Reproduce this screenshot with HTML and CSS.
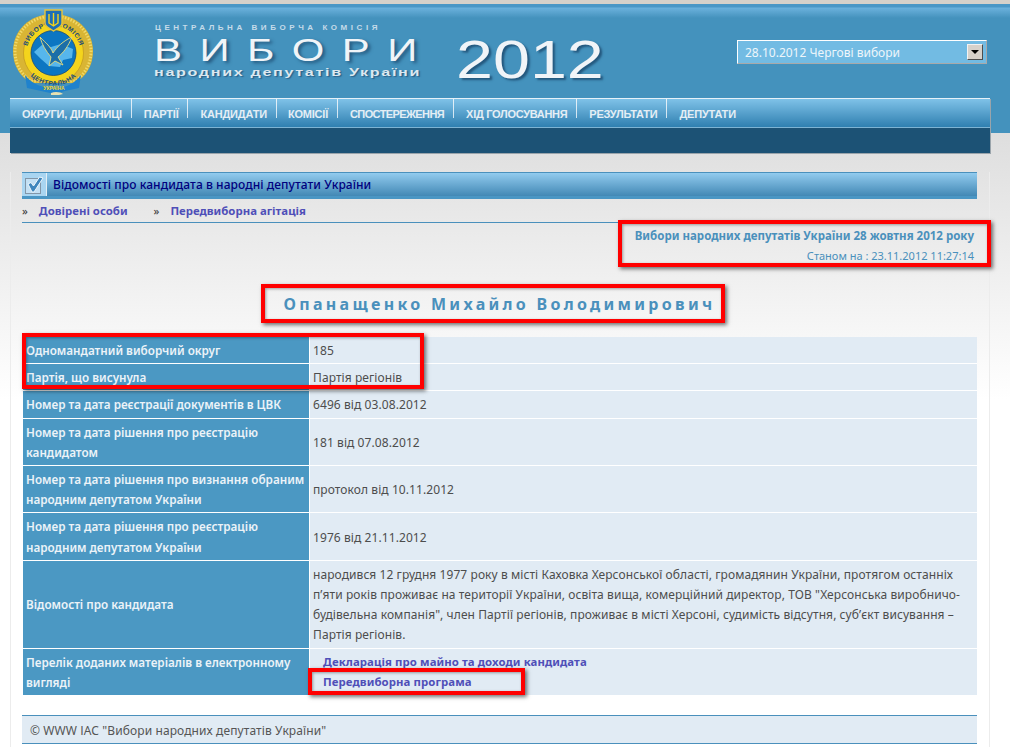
FILE: index.html
```html
<!DOCTYPE html>
<html lang="uk">

<head>
    <meta charset="UTF-8">
    <title>Вибори народних депутатів України 2012</title>
    <link rel="stylesheet" href="styles.css">
</head>

<body>

    <!-- Header -->
    <div class="header">
        <div class="header-top">
            <svg class="logo" width="84" height="90" viewBox="0 0 84 90">
                <defs>
                    <path id="ringTop" d="M13.5 44 A27 27 0 0 1 67.5 44" />
                    <path id="ringBottom" d="M8 44 A32.5 32.5 0 0 0 73 44" />
                </defs>
                <path d="M40 5 C64 5 80 22 80 42 C80 58 72 68 62 74 H18 C8 68 0 58 0 42 C0 22 16 5 40 5 Z" fill="#d9b534" />
                <path d="M40 7 C62 7 78 23 78 42 C78 56 71 66 62 72 H18 C9 66 2 56 2 42 C2 23 18 7 40 7 Z" fill="none" stroke="#f1d968" stroke-width="3" stroke-dasharray="1.5 1.5" />
                <circle cx="40.5" cy="44" r="30" fill="#f4d41c" stroke="#b98f1d" stroke-width="0.6" />
                <circle cx="40.5" cy="44" r="22.5" fill="#0c76c2" stroke="#174a78" stroke-width="0.8" />
                <path d="M21 43 L29 36 L38 38 L48 35 L60 40 L59 49 L50 51 L47 58 L36 57 L28 50 Z" fill="#56b6ec" />
                <path d="M27 28 C33 34 38 38 40 44 C44 38 50 32 59 28 C55 38 50 44 45 48 L50 56 L42 52 L36 57 L38 48 C33 42 29 36 27 28 Z" fill="#1b6ea8" stroke="#e9dc7c" stroke-width="0.9" />
                <text class="logo-ring"><textPath href="#ringTop" startOffset="50%" text-anchor="middle">ВИБОРЧА   КОМІСІЯ</textPath></text>
                <text class="logo-ring"><textPath href="#ringBottom" startOffset="50%" text-anchor="middle">ЦЕНТРАЛЬНА</textPath></text>
                <path d="M12 66 C20 76 30 79 41 79 C52 79 60 76 68 66 L66 79 L52 82 L42 85 L28 82 L14 79 Z" fill="#1f82cd" />
                <text class="logo-ribbon" x="41" y="81" text-anchor="middle">УКРАЇНА</text>
                <path d="M38 84 C42 82 48 83 50 85 L46 86 H38 Z" fill="#e8e0b0" />
                <path d="M32 1 H49 V14 C49 18 44 19 40.5 22 C37 19 32 18 32 14 Z" fill="#1d6fb5" stroke="#e8c53a" stroke-width="1.4" />
                <path d="M40.5 4 V17 M36 5 V14 L40.5 17 L45 14 V5" fill="none" stroke="#f4d41c" stroke-width="1.4" />
            </svg>
            <div class="site-title">
                <div class="title-small">ЦЕНТРАЛЬНА ВИБОРЧА КОМІСІЯ</div>
                <div class="title-big">ВИБОРИ</div>
                <div class="title-sub">народних депутатів України</div>
            </div>
            <div class="title-year">2012</div>
            <div class="election-select">
                <span>28.10.2012 Чергові вибори</span>
                <span class="select-btn"><i></i></span>
            </div>
        </div>

        <div class="navbar">
            <div class="menu">
                <a href="#">ОКРУГИ, ДІЛЬНИЦІ</a>
                <a href="#">ПАРТІЇ</a>
                <a href="#">КАНДИДАТИ</a>
                <a href="#">КОМІСІЇ</a>
                <a href="#">СПОСТЕРЕЖЕННЯ</a>
                <a href="#">ХІД ГОЛОСУВАННЯ</a>
                <a href="#">РЕЗУЛЬТАТИ</a>
                <a href="#">ДЕПУТАТИ</a>
            </div>
            <div class="submenu"></div>
        </div>
    </div>

    <!-- Main Content -->
    <div class="content">
        <div class="section-title">
            <span class="section-icon">
                <svg width="20" height="20" viewBox="0 0 20 20">
                    <rect x="1.5" y="3.5" width="15" height="15" fill="#c3e0f4" stroke="#8296a8" />
                    <path d="M4 9 L7 7.5 L9.5 11 L15.5 2 L19 3 L10 17 L8 17 Z" fill="#3f86bd" stroke="#eef6fb" stroke-width="1" />
                </svg>
            </span>
            <span>Відомості про кандидата в народні депутати України</span>
        </div>

        <div class="subnav">
            <span>»</span><a href="#">Довірені особи</a>
            <span>»</span><a href="#">Передвиборна агітація</a>
        </div>

        <div class="election-info">
            <div class="election-name">Вибори народних депутатів України 28 жовтня 2012 року</div>
            <div class="election-date">Станом на : 23.11.2012 11:27:14</div>
        </div>

        <h1>Опанащенко Михайло Володимирович</h1>

        <table class="info-table">
            <tr>
                <th>Одномандатний виборчий округ</th>
                <td>185</td>
            </tr>
            <tr>
                <th>Партія, що висунула</th>
                <td>Партія регіонів</td>
            </tr>
            <tr>
                <th>Номер та дата реєстрації документів в ЦВК</th>
                <td>6496 від 03.08.2012</td>
            </tr>
            <tr>
                <th>Номер та дата рішення про реєстрацію кандидатом</th>
                <td>181 від 07.08.2012</td>
            </tr>
            <tr>
                <th>Номер та дата рішення про визнання обраним народним депутатом України</th>
                <td>протокол від 10.11.2012</td>
            </tr>
            <tr>
                <th>Номер та дата рішення про реєстрацію народним депутатом України</th>
                <td>1976 від 21.11.2012</td>
            </tr>
            <tr>
                <th>Відомості про кандидата</th>
                <td>народився 12 грудня 1977 року в місті Каховка Херсонської області, громадянин України, протягом останніх п’яти років проживає на території України, освіта вища, комерційний директор, ТОВ "Херсонська виробничо-будівельна компанія", член Партії регіонів, проживає в місті Херсоні, судимість відсутня, суб’єкт висування – Партія регіонів.</td>
            </tr>
            <tr>
                <th>Перелік доданих матеріалів в електронному вигляді</th>
                <td class="links">
                    <a href="#">Декларація про майно та доходи кандидата</a><br>
                    <a href="#">Передвиборна програма</a>
                </td>
            </tr>
        </table>

        <div class="footer">© WWW ІАС "Вибори народних депутатів України"</div>
    </div>

    <!-- Red annotation frames drawn over the page -->
    <div class="mark mark-election"></div>
    <div class="mark mark-name"></div>
    <div class="mark mark-rows"></div>
    <div class="mark mark-program"></div>

</body>

</html>
```

FILE: styles.css
```css
/* Basic Reset */
* {
    margin: 0;
    padding: 0;
    box-sizing: border-box;
}

html {
    height: 100%;
    overflow: hidden;
}

body {
    position: relative;
    height: 747px;
    overflow: hidden;
    background: linear-gradient(#dedede 133px, #ffffff 400px);
    font-family: "Noto Sans", "DejaVu Sans", sans-serif;
    font-size: 12px;
    color: #4d4d4d;
}

a {
    text-decoration: none;
}

/* Header */
.header {
    height: 133px;
    border-top: 4px solid #d6d1ca;
    background: linear-gradient(#4a97c6 0, #4a97c6 3px, #6bb1dc 4px, #4492bd 14px);
}

.header-top {
    display: flex;
    height: 94px;
    position: relative;
}

.logo {
    flex: none;
    margin: 5px 0 0 13px;
}

.logo-ring {
    font-family: "Liberation Sans", sans-serif;
    font-size: 6.5px;
    font-weight: bold;
    letter-spacing: 0.6px;
    fill: #1a4c7a;
}

.logo-ribbon {
    font-family: "Liberation Sans", sans-serif;
    font-size: 5px;
    font-weight: bold;
    fill: #f4d41c;
}

.site-title {
    margin-left: 57px;
    width: 280px;
    color: #e6eef4;
    font-family: "Liberation Sans", sans-serif;
}

.title-small {
    margin: 19px 0 0 1px;
    font-size: 8px;
    font-weight: bold;
    letter-spacing: 3.55px;
    white-space: nowrap;
    color: #c5dbe9;
}

.title-big {
    margin-top: 2px;
    font-size: 31px;
    line-height: 33px;
    letter-spacing: 13px;
    white-space: nowrap;
    color: #f0f4f8;
    text-shadow: 2px 2px 3px #23577d;
    transform: scaleX(1.35);
    transform-origin: left;
}

.title-sub {
    margin-top: -1px;
    font-size: 11.5px;
    font-weight: bold;
    letter-spacing: 1.2px;
    line-height: 13px;
    white-space: nowrap;
    color: #dce8f0;
    text-shadow: 1px 1px 1px #2b5f85;
    transform: scaleX(1.4);
    transform-origin: left;
}

.title-year {
    margin: 24px 0 0 22px;
    width: 145px;
    font-family: "Liberation Sans", sans-serif;
    font-size: 54px;
    line-height: 62px;
    color: #f0f4f8;
    text-shadow: 2px 2px 2px #23577d;
    white-space: nowrap;
    transform: scaleX(1.23);
    transform-origin: left;
}

.election-select {
    display: flex;
    align-items: center;
    justify-content: space-between;
    flex: none;
    width: 250px;
    height: 24px;
    margin: 36px 0 0 auto;
    margin-right: 23px;
    padding: 0 3px 0 7px;
    background-color: #72bbe3;
    border: 1px solid #a9a9a9;
    border-top-color: #fff;
    border-left-color: #fff;
    color: #eef6fb;
}

.select-btn {
    display: flex;
    align-items: center;
    justify-content: center;
    width: 16px;
    height: 16px;
    background-color: #d6d1ca;
    border: 1px solid #4d4d4d;
    border-top-color: #f2f2f2;
    border-left-color: #f2f2f2;
}

.select-btn i {
    width: 0;
    height: 0;
    border-left: 4px solid transparent;
    border-right: 4px solid transparent;
    border-top: 4px solid #000;
}

/* Navigation Bar */
.navbar {
    position: relative;
    margin: 0 20px 0 10px;
    box-shadow: 1px 1px 0 #9aa4ab;
}

.menu {
    display: flex;
    height: 30px;
    border-top: 1px solid #e6f1f8;
    background: linear-gradient(#7fc2e8, #2f7fb0);
    border-bottom: 1px solid #7db3d3;
}

.menu a {
    position: relative;
    padding: 9px 10px 0 12px;
    font-family: "Liberation Sans", sans-serif;
    font-size: 11px;
    font-weight: bold;
    letter-spacing: -0.2px;
    color: #e4eef5;
    white-space: nowrap;
}

.menu a:nth-child(4) {
    padding-left: 11px;
}

.menu a:nth-child(5) {
    letter-spacing: -0.6px;
}

.menu a:nth-child(6) {
    letter-spacing: -0.3px;
}

.menu a:not(:last-child) {
    background: linear-gradient(#e6f1f8, #cfe4f1) right top / 1px 19px no-repeat;
}

.submenu {
    height: 25px;
    background-color: #1c5275;
}

/* Main Content Area */
.content {
    position: relative;
    margin: 39px 20px 0 10px;
    padding: 0 12px 0 11px;
    height: 575px;
    border-left: 1px solid #ececec;
    border-right: 1px solid #ececec;
}

.section-title {
    display: flex;
    align-items: center;
    height: 27px;
    border-top: 1px solid #4a90bc;
    border-bottom: 3px solid #4a96c4;
    background: linear-gradient(#92cbee, #4288b5);
    font-weight: 500;
    letter-spacing: 0.07px;
    color: #00007f;
    font-size: 12px;
    line-height: 25px;
}

.section-icon {
    display: flex;
    align-items: center;
    justify-content: center;
    width: 25px;
    height: 100%;
    margin-right: 6px;
    background-color: #a9d5f1;
    border-right: 1px solid #e3eef5;
}

.subnav {
    height: 24px;
    padding-top: 4px;
    border-bottom: 1px solid #4a90bc;
    font-size: 11.4px;
}

.subnav span {
    margin-right: 11px;
    color: #333;
}

.subnav a {
    margin-right: 23px;
    font-weight: 700;
    color: #4f4fb8;
}

.election-info {
    padding: 5px 3px 0 0;
    height: 56px;
    text-align: right;
    color: #4a90bc;
}

.election-name {
    font-size: 11.5px;
    font-weight: 700;
    line-height: 16px;
}

.election-date {
    margin-top: 4px;
    font-size: 11px;
    line-height: 16px;
}

h1 {
    height: 58px;
    padding-top: 13px;
    text-align: center;
    font-size: 16px;
    line-height: 24px;
    font-weight: 700;
    letter-spacing: 3.3px;
    color: #4a90bc;
}

/* Data Table */
.info-table {
    width: 955px;
    table-layout: fixed;
    border-collapse: separate;
    border-spacing: 0;
    line-height: 20.2px;
}

.info-table th,
.info-table td {
    padding: 3px 3px;
    border-bottom: 1px solid #fff;
    text-align: left;
}

.info-table th {
    width: 288px;
    padding: 3px 0 3px 3px;
    border-left: 1px solid #fff;
    border-right: 1px solid #fff;
    background-color: #4b98c3;
    color: #ecf3f8;
    font-weight: 600;
    font-size: 11.7px;
}

.info-table td {
    padding: 4px 3px 2px;
    background-color: #e1ebf4;
    color: #4d4d4d;
    letter-spacing: 0.08px;
}

.info-table .links {
    padding: 3px 3px 3px 13px;
    line-height: 20px;
}

.links a {
    font-size: 11.4px;
    font-weight: 700;
    color: #4f4fb8;
}

.footer {
    margin-top: 19px;
    height: 29px;
    padding: 6px 0 0 8px;
    border-top: 1px solid #4a90bc;
    border-bottom: 1px solid #4a90bc;
    background-color: #e1ebf4;
    color: #555;
    letter-spacing: 0.1px;
}

/* Annotation frames */
.mark {
    position: absolute;
    border: 4px solid #ff0000;
    box-shadow: 2px 2px 4px rgba(0, 0, 0, 0.55), inset 1px 1px 3px rgba(0, 0, 0, 0.35);
}

.mark-election {
    left: 618px;
    top: 220px;
    width: 373px;
    height: 47px;
}

.mark-name {
    left: 261px;
    top: 284px;
    width: 464px;
    height: 39px;
}

.mark-rows {
    left: 22px;
    top: 333px;
    width: 402px;
    height: 56px;
}

.mark-program {
    left: 308px;
    top: 668px;
    width: 217px;
    height: 27px;
}
```
